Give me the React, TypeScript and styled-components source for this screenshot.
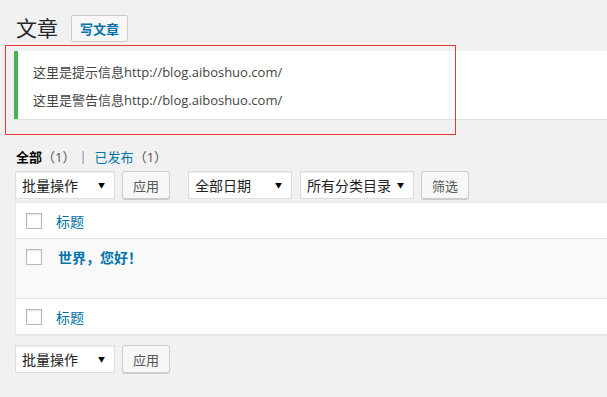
import React from 'react'
import styled, { createGlobalStyle } from 'styled-components'

const GlobalStyle = createGlobalStyle`
  html, body {
    margin: 0;
    padding: 0;
    background: #f1f1f1;
  }
  body {
    font-family: "Open Sans", "Noto Sans CJK SC", sans-serif;
    color: #444;
    font-size: 13px;
    overflow: hidden;
  }
`

const CJK = `"Open Sans", "Noto Sans CJK SC", sans-serif`

const Page = styled.div`
  position: relative;
  width: 607px;
  height: 397px;
  overflow: hidden;
  padding: 15px 0 0 14px;
  box-sizing: border-box;
`

const HeadRow = styled.div`
  display: flex;
  align-items: center;
  gap: 13px;
  height: 27px;
  padding-left: 2px;
`

const Title = styled.h1`
  margin: 0;
  font-family: ${CJK};
  font-size: 21px;
  font-weight: 400;
  color: #23282d;
  line-height: 27px;
`

const AddNew = styled.a`
  display: flex;
  align-items: center;
  height: 25px;
  padding: 0 8px;
  border: 1px solid #ccc;
  border-radius: 2px;
  background: #f7f7f7;
  color: #0073aa;
  font-weight: 700;
  font-size: 13px;
  font-family: ${CJK};
`

const Notice = styled.div`
  margin-top: 9px;
  background: #fff;
  border-left: 4px solid #46b450;
  box-shadow: 0 1px 1px rgba(0, 0, 0, 0.08);
  padding: 11px 0 0 15px;
  height: 68px;
  box-sizing: border-box;
  display: flex;
  flex-direction: column;
  gap: 8px;
`

const NoticeLine = styled.p`
  margin: 0;
  font-size: 13px;
  color: #444;
  line-height: 20px;
`

const Annotation = styled.div`
  position: absolute;
  left: 5px;
  top: 45px;
  width: 449px;
  height: 88px;
  border: 1px solid #e03a3a;
  pointer-events: none;
`

const Filters = styled.ul`
  list-style: none;
  margin: 28px 0 0 2px;
  padding: 0;
  display: flex;
  align-items: center;
  height: 18px;
  font-size: 13px;
`

const FilterItem = styled.li<{ $current?: boolean }>`
  color: ${p => (p.$current ? '#000' : '#0073aa')};
  font-weight: ${p => (p.$current ? 700 : 400)};
`

const Count = styled.span`
  color: #555;
  font-weight: 400;
`

const Sep = styled.span`
  color: #8a7fa8;
  margin: 0 8px 0 4px;
`

const ActionRow = styled.div<{ $top?: number }>`
  display: flex;
  align-items: center;
  margin-top: ${p => p.$top ?? 0}px;
  margin-left: 1px;
  height: 28px;
`

const Select = styled.div<{ $w: number; $gap?: number }>`
  display: flex;
  align-items: center;
  justify-content: space-between;
  box-sizing: border-box;
  width: ${p => p.$w}px;
  height: 28px;
  margin-right: ${p => p.$gap ?? 7}px;
  padding: 0 9px 0 6px;
  background: #fff;
  border: 1px solid #ddd;
  box-shadow: inset 0 1px 2px rgba(0, 0, 0, 0.07);
  font-size: 14px;
  color: #222;
`

const Arrow = styled.span`
  font-size: 7px;
  color: #000;
`

const Button = styled.button<{ $gap?: number }>`
  height: 28px;
  box-sizing: border-box;
  padding: 0 10px;
  margin-right: ${p => p.$gap ?? 0}px;
  background: #f7f7f7;
  border: 1px solid #ccc;
  border-radius: 3px;
  box-shadow: 0 1px 0 #ccc;
  font-family: ${CJK};
  font-size: 13px;
  color: #555;
`

const Table = styled.div`
  margin-top: 3px;
  margin-left: 1px;
  background: #fff;
  border: 1px solid #e5e5e5;
  border-right: none;
  box-shadow: 0 1px 1px rgba(0, 0, 0, 0.04);
`

const Row = styled.div<{ $h: number; $alt?: boolean; $line?: boolean }>`
  display: flex;
  align-items: ${p => (p.$alt ? 'flex-start' : 'center')};
  height: ${p => p.$h}px;
  box-sizing: border-box;
  padding: ${p => (p.$alt ? '10px' : '0')} 0 0 10px;
  background: ${p => (p.$alt ? '#f9f9f9' : '#fff')};
  border-bottom: ${p => (p.$line ? '1px solid #e1e1e1' : 'none')};
`

const Check = styled.span`
  display: inline-block;
  width: 16px;
  height: 16px;
  box-sizing: border-box;
  border: 1px solid #b4b9be;
  background: #fff;
  box-shadow: inset 0 1px 2px rgba(0, 0, 0, 0.1);
`

const ColLabel = styled.a`
  margin-left: 14px;
  color: #0073aa;
  font-size: 14px;
`

const PostTitle = styled.a`
  margin-left: 16px;
  color: #0073aa;
  font-size: 14px;
  font-weight: 700;
  line-height: 18px;
`

export default function App() {
  return (
    <>
      <GlobalStyle />
      <Page>
        <HeadRow>
          <Title>文章</Title>
          <AddNew>写文章</AddNew>
        </HeadRow>
        <Notice>
          <NoticeLine>这里是提示信息http://blog.aiboshuo.com/</NoticeLine>
          <NoticeLine>这里是警告信息http://blog.aiboshuo.com/</NoticeLine>
        </Notice>
        <Filters>
          <FilterItem $current>
            全部<Count>（1）</Count>
          </FilterItem>
          <Sep>|</Sep>
          <FilterItem>
            已发布<Count>（1）</Count>
          </FilterItem>
        </Filters>
        <ActionRow $top={6}>
          <Select $w={100}>
            批量操作<Arrow>▼</Arrow>
          </Select>
          <Button $gap={18}>应用</Button>
          <Select $w={104} $gap={8}>
            全部日期<Arrow>▼</Arrow>
          </Select>
          <Select $w={114}>
            所有分类目录<Arrow>▼</Arrow>
          </Select>
          <Button>筛选</Button>
        </ActionRow>
        <Table>
          <Row $h={36} $line>
            <Check />
            <ColLabel>标题</ColLabel>
          </Row>
          <Row $h={60} $alt $line>
            <Check />
            <PostTitle>世界，您好！</PostTitle>
          </Row>
          <Row $h={35}>
            <Check />
            <ColLabel>标题</ColLabel>
          </Row>
        </Table>
        <ActionRow $top={10}>
          <Select $w={100}>
            批量操作<Arrow>▼</Arrow>
          </Select>
          <Button>应用</Button>
        </ActionRow>
        <Annotation />
      </Page>
    </>
  )
}
